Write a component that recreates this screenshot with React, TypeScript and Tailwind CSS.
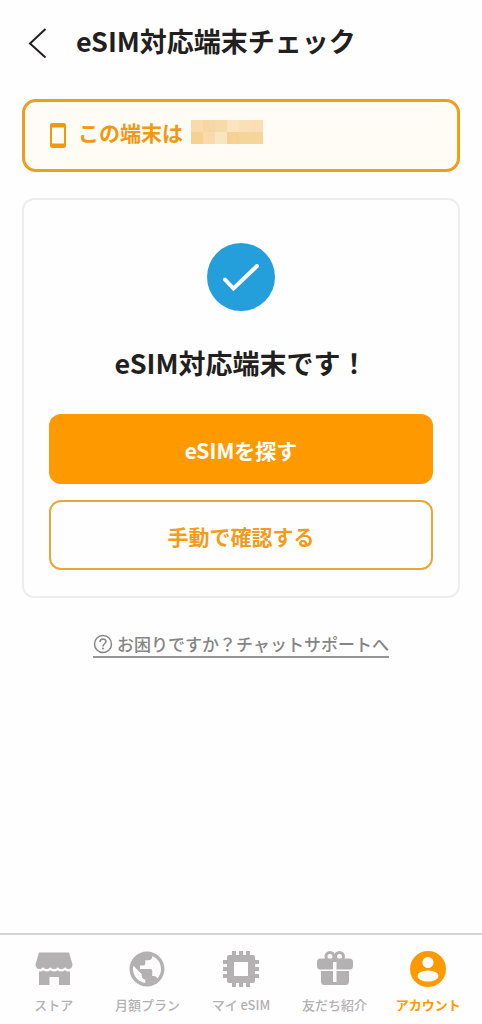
import React from "react";

const StoreIcon: React.FC = () => (
    <svg viewBox="0 0 40 36" className="h-9 w-10" fill="currentColor" aria-hidden="true">
        <path d="M5 1.500h30l3.500 12c0 2.500-1.800 4.500-3.800 4.500-1.500 0-2.900-1-3.600-1.800-.8 1.100-2.200 1.800-3.700 1.800s-2.900-.7-3.700-1.800c-.8 1.100-2.200 1.800-3.700 1.800s-2.900-.7-3.700-1.800c-.8 1.100-2.200 1.800-3.700 1.800s-2.700-.7-3.500-1.800C8.300 17 7 18 5.300 18 3.300 18 1.500 16 1.500 13.500z" />
        <path d="M5 20.500c2 .2 3.200-.4 4.200-1.300 2.200 1.600 5 1.600 7.200 0 2.200 1.600 5 1.600 7.200 0 2.200 1.600 5 1.600 7.200 0 1 .9 2.700 1.500 5.200 1.300V34H25v-8h-9.500v8H5z" />
    </svg>
);

const GlobeIcon: React.FC = () => (
    <svg viewBox="0 0 24 24" className="h-[42px] w-[42px]" fill="currentColor" aria-hidden="true">
        <path d="M12 2C6.480 2 2 6.480 2 12s4.480 10 10 10 10-4.480 10-10S17.520 2 12 2zm-1 17.930c-3.950-.49-7-3.850-7-7.930 0-.62.080-1.210.21-1.790L9 15v1c0 1.100.9 2 2 2v1.930zm6.900-2.540c-.26-.81-1-1.390-1.900-1.390h-1v-3c0-.55-.45-1-1-1H8v-2h2c.55 0 1-.45 1-1V7h2c1.100 0 2-.9 2-2v-.41c2.930 1.190 5 4.060 5 7.410 0 2.080-.8 3.970-2.100 5.390z" />
    </svg>
);

const ChipIcon: React.FC = () => (
    <svg viewBox="0 0 36 36" className="h-9 w-9" fill="currentColor" aria-hidden="true">
        <path
            fillRule="evenodd"
            d="M9 0h4v4h3V0h4v4h3V0h4v4h3q2 0 2 2v3h4v4h-4v3h4v4h-4v3h4v4h-4v3q0 2-2 2h-3v4h-4v-4h-3v4h-4v-4h-3v4H9v-4H6q-2 0-2-2v-3H0v-4h4v-3H0v-4h4v-3H0V9h4V6q0-2 2-2h3zM11 11v14h14V11z"
        />
    </svg>
);

const GiftIcon: React.FC = () => (
    <svg viewBox="0 0 36 36" className="h-9 w-9" aria-hidden="true">
        <g fill="none" stroke="currentColor" strokeWidth="3">
            <circle cx="13" cy="5.500" r="4" />
            <circle cx="22.500" cy="5.500" r="4" />
        </g>
        <path
            fill="currentColor"
            fillRule="evenodd"
            d="M3.500 7.500h29q3.500 0 3.500 3.500v4q0 3.500-3.500 3.500h-29Q0 18.500 0 15v-4q0-3.500 3.500-3.500zM16 11v7.500h3.500V11z"
        />
        <path
            fill="currentColor"
            fillRule="evenodd"
            d="M4 20h28v10.500q0 3.500-3.500 3.500h-21Q4 34 4 30.500zM16 20v11h3.500V20z"
        />
    </svg>
);

const AccountIcon: React.FC = () => (
    <svg viewBox="0 0 36 36" className="h-9 w-9" aria-hidden="true">
        <circle cx="18" cy="18" r="18" fill="currentColor" />
        <circle cx="18" cy="11.500" r="5.500" fill="white" />
        <ellipse cx="18" cy="25" rx="10.500" ry="5.500" fill="white" />
    </svg>
);

const PhoneIcon: React.FC = () => (
    <svg viewBox="0 0 16 25" className="h-[25px] w-4 shrink-0" aria-hidden="true">
        <path
            fill="currentColor"
            fillRule="evenodd"
            d="M2.500 0h11Q16 0 16 2.500v20q0 2.500-2.500 2.500h-11Q0 25 0 22.500v-20Q0 0 2.500 0zM2 4.500v16h12v-16z"
        />
    </svg>
);

// Colours of the blurred-out device name, row by row
const mosaic = [
    ["#f8dba9", "#f6d7a2", "#f7daa9", "#fae3bd", "#f9e0b7", "#f9dfb3"],
    ["#f5d294", "#f8dba9", "#fae5c3", "#f5d294", "#f6d59b", "#f6d59b"],
];

const tabs = [
    { label: "ストア", icon: <StoreIcon />, active: false },
    { label: "月額プラン", icon: <GlobeIcon />, active: false },
    { label: "マイ eSIM", icon: <ChipIcon />, active: false },
    { label: "友だち紹介", icon: <GiftIcon />, active: false },
    { label: "アカウント", icon: <AccountIcon />, active: true },
];

const App: React.FC = () => {
    return (
        <div className="flex min-h-screen flex-col bg-[#fefefe] font-['Noto_Sans_CJK_JP',sans-serif] text-[#231f20]">
            {/* Header */}
            <header className="flex h-[86px] items-center gap-7 pl-7">
                <button type="button" aria-label="戻る">
                    <svg viewBox="0 0 20 32" className="h-8 w-5" fill="none" stroke="currentColor" strokeWidth="2" aria-hidden="true">
                        <path d="M17.500 2L2 16.500 17.500 30.500" />
                    </svg>
                </button>
                <h1 className="pb-1 text-[27px] leading-10 font-bold">eSIM対応端末チェック</h1>
            </header>

            <main className="flex flex-1 flex-col px-[22px] pt-[13px]">
                {/* Device */}
                <div className="flex h-[73px] items-center rounded-[14px] border-3 border-[#ee9d1c] bg-[#fffcf5] pl-[25px] text-[#f0980f]">
                    <PhoneIcon />
                    <p className="flex items-center gap-2 pb-2 pl-3 text-[21px] leading-8 font-bold">
                        この端末は
                        <svg viewBox="0 0 72 24" className="h-6 w-[72px]" shapeRendering="crispEdges" role="img" aria-label="端末名">
                            {mosaic.map((row, y) =>
                                row.map((color, x) => (
                                    <rect key={`${x}-${y}`} x={x * 12} y={y * 12} width="12" height="12" fill={color} />
                                ))
                            )}
                        </svg>
                    </p>
                </div>

                {/* Result */}
                <section className="mt-[26px] flex flex-col items-center rounded-xl border-2 border-[#ededed] px-[25px] pt-[43px] pb-[26px]">
                    <svg viewBox="0 0 68 68" className="h-[68px] w-[68px]" aria-hidden="true">
                        <circle cx="34" cy="34" r="34" fill="#259fdb" />
                        <path d="M18 36.500L26.500 45.500 50 23" fill="none" stroke="white" strokeWidth="4" strokeLinecap="round" />
                    </svg>
                    <h2 className="mt-8 text-[27px] leading-10 font-bold">eSIM対応端末です！</h2>
                    <button type="button" className="mt-[31px] h-[70px] w-full rounded-xl bg-[#ff9900] pt-1 text-[21px] font-bold text-white">
                        eSIMを探す
                    </button>
                    <button type="button" className="mt-4 h-[70px] w-full rounded-xl border-2 border-[#e7a737] pt-1 text-[21px] font-bold text-[#ee9d1c]">
                        手動で確認する
                    </button>
                </section>

                {/* Support */}
                <a href="#support" className="mt-[34px] flex items-center gap-1 self-center border-b-2 border-[#969696] text-[17px] leading-6 font-medium text-[#858585]">
                    <svg viewBox="0 0 20 20" className="h-5 w-5" fill="none" stroke="currentColor" aria-hidden="true">
                        <circle cx="10" cy="10" r="8.500" strokeWidth="1.500" />
                        <path d="M7 8c0-4 6-4 6-.5 0 2-3 2.200-3 5" strokeWidth="1.500" />
                        <circle cx="10" cy="14.500" r="1" fill="currentColor" stroke="none" />
                    </svg>
                    お困りですか？チャットサポートへ
                </a>
            </main>

            {/* Tab bar */}
            <nav className="grid grid-cols-5 border-t-2 border-[#d4d4d4] px-[7px] pt-4 pb-[9px]">
                {tabs.map((tab) => (
                    <a
                        key={tab.label}
                        href="#tab"
                        aria-current={tab.active ? "page" : undefined}
                        className={`flex flex-col items-center gap-2 text-[13px] leading-5 whitespace-nowrap ${
                            tab.active ? "font-bold text-[#ff9900]" : "font-medium text-[#b3b1b2]"
                        }`}
                    >
                        <span className="flex h-9 items-center">{tab.icon}</span>
                        {tab.label}
                    </a>
                ))}
            </nav>
        </div>
    );
};

export default App;
